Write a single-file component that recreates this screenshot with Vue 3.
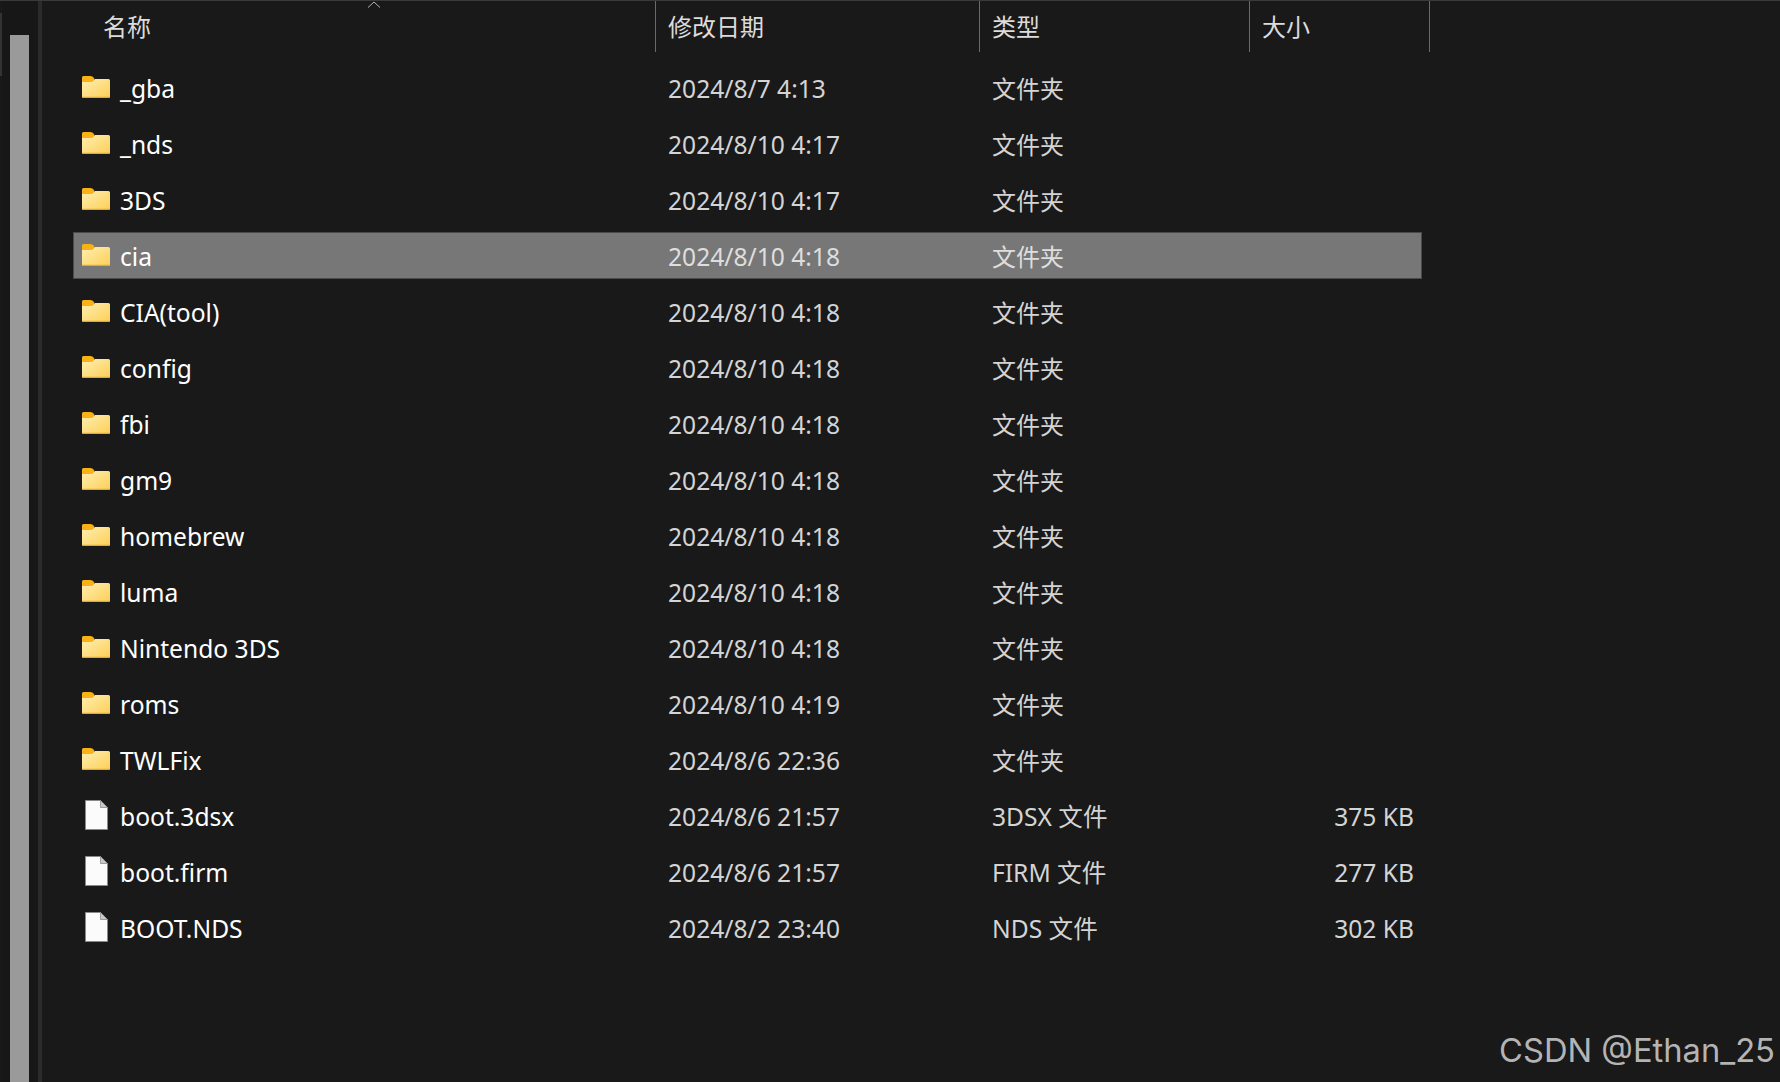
<script setup>
const folders = [
  ['_gba', '2024/8/7 4:13'],
  ['_nds', '2024/8/10 4:17'],
  ['3DS', '2024/8/10 4:17'],
  ['cia', '2024/8/10 4:18'],
  ['CIA(tool)', '2024/8/10 4:18'],
  ['config', '2024/8/10 4:18'],
  ['fbi', '2024/8/10 4:18'],
  ['gm9', '2024/8/10 4:18'],
  ['homebrew', '2024/8/10 4:18'],
  ['luma', '2024/8/10 4:18'],
  ['Nintendo 3DS', '2024/8/10 4:18'],
  ['roms', '2024/8/10 4:19'],
  ['TWLFix', '2024/8/6 22:36'],
].map(([name, date]) => ({ name, date, type: '文件夹', size: '', folder: true }))
const files = [
  { name: 'boot.3dsx', date: '2024/8/6 21:57', type: '3DSX 文件', size: '375 KB' },
  { name: 'boot.firm', date: '2024/8/6 21:57', type: 'FIRM 文件', size: '277 KB' },
  { name: 'BOOT.NDS', date: '2024/8/2 23:40', type: 'NDS 文件', size: '302 KB' },
]
const rows = [...folders, ...files]
</script>

<template>
  <div class="window">
    <aside class="rail">
      <div class="edge"></div>
      <div class="track"><div class="thumb"></div></div>
      <div class="divider"></div>
    </aside>
    <main class="list">
      <header class="head">
        <div class="hcell hname">名称
          <svg class="sort" width="14" height="7" viewBox="0 0 14 7"><path d="M1 6.500 7 1l6 5.500" fill="none" stroke="#b5b5b5" stroke-width="1"/></svg>
        </div>
        <div class="hcell hdate">修改日期</div>
        <div class="hcell htype">类型</div>
        <div class="hcell hsize">大小</div>
      </header>
      <div class="rows">
        <div v-for="(r, i) in rows" :key="r.name" class="row" :class="{ selected: r.name === 'cia' }">
          <div class="name">
            <span class="icon">
              <svg v-if="r.folder" width="28" height="22" viewBox="0 0 28 22">
                <defs>
                  <linearGradient :id="'folder-' + i" x1="0" y1="0" x2="1" y2="1">
                    <stop offset="0" stop-color="#ffeeb0"/>
                    <stop offset="1" stop-color="#fdcf57"/>
                  </linearGradient>
                </defs>
                <path d="M1.500 0H8.500C9.800 0 10.800.8 11.500 1.600L12.500 3V6H0V1.500A1.500 1.500 0 0 1 1.500 0Z" fill="#f7b216"/>
                <path d="M0 6h9c1 0 1.800-.3 2.300-1L13 3h13.500A1.500 1.500 0 0 1 28 4.500v16a1.500 1.500 0 0 1-1.500 1.500h-25A1.500 1.500 0 0 1 0 20.500Z" :fill="'url(#folder-' + i + ')'"/>
                <path d="M0 20.500V20.800h28V20.500A1.500 1.500 0 0 1 26.500 22h-25A1.500 1.500 0 0 1 0 20.500Z" fill="#e9ab1c"/>
              </svg>
              <svg v-else class="doc" width="23" height="30" viewBox="0 0 23 30">
                <path d="M.5.5h15l7 7v22H.5Z" fill="#fbfbfb" stroke="#8a8a8a"/>
                <path d="M15.500.5v7h7Z" fill="#c9c9c9" stroke="#8a8a8a" stroke-width=".8"/>
              </svg>
            </span>
            <span class="text">{{ r.name }}</span>
          </div>
          <div class="date text">{{ r.date }}</div>
          <div class="type text" :class="{ cjk: r.folder }">{{ r.type }}</div>
          <div class="size text">{{ r.size }}</div>
        </div>
      </div>
    </main>
    <div class="mark">CSDN @Ethan_25</div>
  </div>
</template>

<style>
html, body { margin: 0; background: #191919; overflow: hidden; }
</style>

<style scoped>
.window {
  position: relative;
  display: flex;
  width: 1780px;
  height: 1082px;
  box-sizing: border-box;
  border-top: 1px solid #3a3a3a;
  background: #191919;
  overflow: hidden;
  font-family: "Noto Sans", "Noto Sans CJK SC", sans-serif;
  font-size: 24.6px;
  color: #fff;
}
.rail {
  display: flex;
  width: 44px;
  flex: none;
  background: #191919;
}
.edge {
  width: 2px;
  height: 63px;
  margin-top: 12px;
  background: #333;
}
.track {
  width: 36px;
  padding: 34px 0 0 8px;
  box-sizing: border-box;
  background: #171717;
}
.thumb {
  width: 19px;
  height: 100%;
  background: #9a9a9a;
}
.divider {
  width: 4px;
  background: #2b2b2b;
}
.list {
  flex: 1;
  min-width: 0;
}
.head {
  display: flex;
  height: 51px;
}
.hcell {
  position: relative;
  box-sizing: border-box;
  height: 51px;
  padding-left: 12px;
  line-height: 52px;
  font-size: 24px;
  color: #dcdcdc;
  border-right: 1px solid #6a6a6a;
}
.hname {
  width: 612px;
  padding-left: 59px;
}
.hdate { width: 324px; }
.htype { width: 270px; }
.hsize { width: 180px; }
.sort {
  position: absolute;
  left: 323px;
  top: 0;
}
.rows {
  display: flex;
  flex-direction: column;
  gap: 9px;
  padding-left: 29px;
  padding-top: 12px;
}
.row {
  display: grid;
  grid-template-columns: 595px 324px 323px 100px;
  width: 1349px;
  height: 47px;
  box-sizing: border-box;
  align-items: center;
  line-height: 47px;
  color: #fff;
}
.row.selected {
  background: #777;
  box-shadow: inset 0 0 0 1px #4a4a4a;
}
.name {
  display: flex;
  align-items: center;
  padding-left: 9px;
}
.text {
  line-height: 49px;
}
.icon {
  display: flex;
  width: 38px;
  margin-top: -4px;
}
.icon svg { display: block; }
.doc { margin: 0 0 0 3px; }
.date, .type { color: #d4d4d4; }
.cjk { font-size: 24px; }
.size {
  text-align: right;
  padding-right: 1px;
  color: #d4d4d4;
  white-space: nowrap;
}
.selected .date, .selected .type { color: #dedede; }
.mark {
  position: absolute;
  right: 5px;
  bottom: 12px;
  font-family: "Inter", "Liberation Sans", sans-serif;
  font-size: 32.7px;
  color: #b4b4b4;
  white-space: nowrap;
}
</style>
